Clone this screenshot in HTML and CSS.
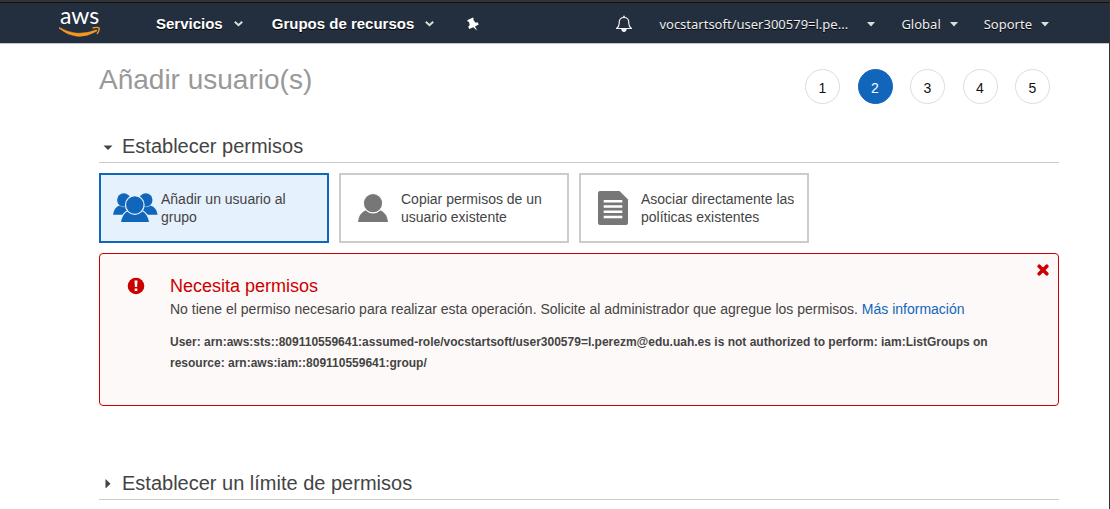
FILE: index.html
```html
<!DOCTYPE html>
<html lang="es">
<head>
<meta charset="utf-8">
<meta name="viewport" content="width=device-width, initial-scale=1">
<title>Añadir usuario(s)</title>
<link rel="stylesheet" href="styles.css">
</head>
<body>
<header class="topbar">
  <a class="logo" href="#" aria-label="Inicio">
    <svg width="42" height="44" viewBox="0 -5 42 44">
      <text class="logo-word" x="1" y="18">aws</text>
      <path d="M0 21.300Q18 32 37.500 23.800L38 25Q18 37 0 22.300Z" fill="#f7981f" stroke="#f7981f" stroke-width=".5"/>
      <path d="M33.500 22Q38.500 20.800 40.200 22Q40.600 25 38 28" fill="none" stroke="#f7981f" stroke-width="1.400"/>
    </svg>
  </a>
  <nav class="services">
    <button class="nav-main" type="button">Servicios
      <svg width="9" height="6" viewBox="0 0 9 6"><path d="M.8.8 4.500 4.200 8.200.8" fill="none" stroke="#ddd" stroke-width="2"/></svg>
    </button>
    <button class="nav-main" type="button">Grupos de recursos
      <svg width="9" height="6" viewBox="0 0 9 6"><path d="M.8.8 4.500 4.200 8.200.8" fill="none" stroke="#ddd" stroke-width="2"/></svg>
    </button>
    <button class="nav-main" type="button" aria-label="Fijar accesos directos">
      <svg width="20" height="15" viewBox="-3 0 20 15"><path d="M1.200 3.200 7 .4 7.800 1.900 7.200 2.800 9.600 5.700 11.600 5.300 12.800 7.600 9 9.500 11.300 13.800 7.300 10.300 3.300 12 2.200 9.700 3.700 8.100 2.900 4.700 1.900 4.700Z" fill="#fff"/></svg>
    </button>
  </nav>
  <nav class="account">
    <button class="nav-side" type="button" aria-label="Notificaciones">
      <svg width="18" height="18" viewBox="0 0 18 18"><path d="M1.500 13.500Q4.200 11.500 4.200 8.500V7.500Q4.200 2.500 9 2.500T13.800 7.500V8.500Q13.800 11.500 16.500 13.500Z" fill="none" stroke="#f2f2f2" stroke-width="1.200" stroke-linejoin="round"/><path d="M8.200.8h1.600V3H8.200ZM6.200 14h5.600Q11.300 17 9 17T6.200 14Z" fill="#f2f2f2"/></svg>
    </button>
    <button class="nav-side user" type="button">vocstartsoft/user300579=l.pe...
      <svg width="8" height="5" viewBox="0 0 8 5"><path d="M0 0H8L4 4.500Z" fill="#ddd"/></svg>
    </button>
    <button class="nav-side" type="button">Global
      <svg width="8" height="5" viewBox="0 0 8 5"><path d="M0 0H8L4 4.500Z" fill="#ddd"/></svg>
    </button>
    <button class="nav-side" type="button">Soporte
      <svg width="8" height="5" viewBox="0 0 8 5"><path d="M0 0H8L4 4.500Z" fill="#ddd"/></svg>
    </button>
  </nav>
</header>
<main class="page">
  <div class="heading">
    <h1 class="title">Añadir usuario(s)</h1>
    <ol class="steps">
      <li class="step">1</li>
      <li class="step current" aria-current="step">2</li>
      <li class="step">3</li>
      <li class="step">4</li>
      <li class="step">5</li>
    </ol>
  </div>
  <h2 class="section">
    <button class="toggle" type="button" aria-expanded="true">
      <svg width="18" height="10" viewBox="0 0 18 10"><path d="M4.500 4.500H13.500L9 9Z" fill="#444"/></svg>Establecer permisos
    </button>
  </h2>
  <div class="options">
    <button class="option selected" type="button">
      <svg class="option-icon" width="46" height="36" viewBox="0 0 46 36">
        <g fill="#1166bb"><circle cx="10.800" cy="10" r="6.700"/><circle cx="32.800" cy="10" r="6.700"/><path d="M0 24.700Q1 17.500 6.500 15.500Q10.500 18.500 14.500 16L19 24.700ZM44.600 24.700Q43.600 17.500 37.500 15.500Q33.500 18.500 29.500 16L25 24.700Z"/></g>
        <g fill="#1166bb" stroke="#e5f1fd" stroke-width="1.200"><path d="M7.400 32.600Q8.500 23.500 15 20.500H29Q35.500 23.500 36.600 32.600Z"/><circle cx="21.800" cy="15" r="9.300"/></g>
      </svg>
      <span>Añadir un usuario al grupo</span>
    </button>
    <button class="option" type="button">
      <svg class="option-icon" width="46" height="36" viewBox="0 0 46 36" fill="#777"><path d="M5 32Q6 23 13 20H27Q34 23 35 32Z"/><circle cx="20" cy="13.200" r="9.700" stroke="#fff" stroke-width="1.200"/></svg>
      <span>Copiar permisos de un usuario existente</span>
    </button>
    <button class="option" type="button">
      <svg class="option-icon" width="46" height="36" viewBox="0 0 46 36"><path d="M7 1H26.500L35 9.500V33Q35 35 33 35H7Q5 35 5 33V3Q5 1 7 1Z" fill="#777"/><path d="M10.700 11.200H29.300M10.700 16.500H29.300M10.700 21.800H29.300M10.700 27H29.300" stroke="#fff" stroke-width="2.500"/></svg>
      <span>Asociar directamente las políticas existentes</span>
    </button>
  </div>
  <section class="alert" role="alert">
    <svg class="alert-icon" width="18" height="18" viewBox="0 0 18 18"><circle cx="9" cy="9" r="8.300" fill="#c00"/><path d="M7.500 3.500h3l-.4 6.500H7.900ZM7.700 11.500h2.600v2.500H7.700Z" fill="#fff"/></svg>
    <div class="alert-body">
      <h3 class="alert-title">Necesita permisos</h3>
      <p class="alert-text">No tiene el permiso necesario para realizar esta operación. Solicite al administrador que agregue los permisos. <a class="link" href="#">Más información</a></p>
      <p class="alert-detail">User: arn:aws:sts::809110559641:assumed-role/vocstartsoft/user300579=l.perezm@edu.uah.es is not authorized to perform: iam:ListGroups on resource: arn:aws:iam::809110559641:group/</p>
    </div>
    <button class="close" type="button" aria-label="Cerrar">
      <svg width="12" height="12" viewBox="0 0 12 12"><path d="M2.200 2.200 9.800 9.800M9.800 2.200 2.200 9.800" stroke="#c00" stroke-width="3.600" stroke-linecap="round"/></svg>
    </button>
  </section>
  <h2 class="section">
    <button class="toggle" type="button" aria-expanded="false">
      <svg width="18" height="10" viewBox="0 0 18 10"><path d="M6.500 1V10.500L11.500 5.800Z" fill="#444"/></svg>Establecer un límite de permisos
    </button>
  </h2>
</main>
</body>
</html>
```
FILE: styles.css
```css
* { box-sizing: border-box; }

body {
  margin: 0;
  min-height: 100vh;
  border-top: 2px solid #333;
  border-right: 1px solid #333;
  background: #fff;
  color: #444;
  font: 14px/18px "Liberation Sans", Arial, sans-serif;
}

button {
  margin: 0;
  padding: 0;
  border: 0;
  background: none;
  color: inherit;
  font: inherit;
  text-align: left;
  cursor: pointer;
}

svg { flex: none; }

.topbar {
  display: flex;
  align-items: center;
  height: 42px;
  padding: 0 60px 0 59px;
  border-top: 1px solid #111;
  border-bottom: 1px solid #c4c4cc;
  background: #232f3e;
}

.logo { display: flex; margin-right: 55px; }

.logo-word {
  fill: #fff;
  font: 400 23px/24px Lato, sans-serif;
}

.services, .account {
  display: flex;
  align-items: center;
  padding-top: 2px;
}

.services { gap: 29px; }

.account { gap: 26px; margin-left: auto; }

.nav-main, .nav-side {
  display: flex;
  align-items: center;
  color: #fff;
  text-shadow: 0 1px 0 #000;
  white-space: nowrap;
}

.nav-main {
  gap: 11px;
  font-size: 15px;
  font-weight: 700;
}

.nav-side {
  gap: 9px;
  color: #eee;
  font: 13px/18px "Noto Sans", Verdana, sans-serif;
}

.user {
  justify-content: space-between;
  min-width: 216px;
}

.page { padding: 0 50px 0 99px; }

.heading {
  display: flex;
  justify-content: space-between;
  padding: 19px 9px 0 0;
  height: 88px;
}

.title {
  margin: 0;
  color: #999;
  font-size: 28px;
  font-weight: 400;
  line-height: 34px;
}

.steps {
  display: flex;
  justify-content: space-between;
  width: 245px;
  margin: 6px 0 0;
  padding: 0;
  list-style: none;
}

.step {
  width: 35px;
  height: 35px;
  border: 1px solid #ddd;
  border-radius: 50%;
  color: #111;
  line-height: 36px;
  text-align: center;
}

.current {
  border-color: #1166bb;
  background: #1166bb;
  color: #fff;
}

.section {
  margin: 0;
  padding-bottom: 2px;
  border-bottom: 1px solid #ccc;
  font-size: 20px;
  font-weight: 400;
  line-height: 28px;
}

.toggle {
  display: flex;
  align-items: center;
  gap: 5px;
}

.options {
  display: flex;
  flex-wrap: wrap;
  gap: 10px;
  margin: 10px 0;
}

.option {
  display: flex;
  align-items: center;
  gap: 2px;
  width: 230px;
  height: 70px;
  padding: 0 8px 0 12px;
  border: 2px solid #ccc;
}

.selected {
  border-color: #1166bb;
  background: #e5f1fd;
}

.alert {
  display: flex;
  align-items: flex-start;
  min-height: 153px;
  margin-bottom: 63px;
  padding: 20px 9px 20px 27px;
  border: 1px solid #c00;
  border-radius: 4px;
  background: #fdf9f8;
}

.alert-icon { margin: 3px 25px 0 0; }

.alert-body { flex: 1; }

.alert-title {
  margin: 0;
  color: #c00;
  font-size: 18px;
  font-weight: 400;
  line-height: 24px;
}

.alert-text { margin: 0; line-height: 22px; }

.link { color: #1166bb; text-decoration: none; }

.alert-detail {
  max-width: 830px;
  margin: 12px 0 0;
  font-size: 12px;
  font-weight: 700;
  line-height: 21px;
}

.close { display: flex; margin-top: -10px; }
```
